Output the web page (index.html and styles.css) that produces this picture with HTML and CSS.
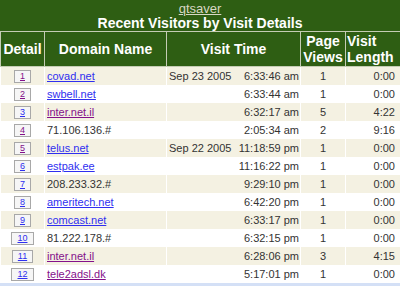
FILE: index.html
```html
<!DOCTYPE html>
<html>
<head>
<meta charset="utf-8">
<link rel="stylesheet" href="styles.css">
</head>
<body>
<div class="page">
  <div class="top">
    <a class="site" href="#">qtsaver</a>
    <div class="title">Recent Visitors by Visit Details</div>
  </div>
  <table class="visits">
    <colgroup>
      <col class="c1"><col class="c2"><col class="c3"><col class="c4"><col class="c5">
    </colgroup>
    <thead>
      <tr>
        <th>Detail</th>
        <th>Domain Name</th>
        <th>Visit Time</th>
        <th>Page Views</th>
        <th class="left">Visit Length</th>
      </tr>
    </thead>
    <tbody>
      <tr class="odd"><td class="det"><a class="btn v" href="#">1</a></td><td class="dom"><a href="#">covad.net</a></td><td class="time"><div class="tw"><span>Sep 23 2005</span><span>6:33:46 am</span></div></td><td class="pv">1</td><td class="len">0:00</td></tr>
      <tr><td class="det"><a class="btn v" href="#">2</a></td><td class="dom"><a href="#">swbell.net</a></td><td class="time"><div class="tw"><span></span><span>6:33:44 am</span></div></td><td class="pv">1</td><td class="len">0:00</td></tr>
      <tr class="odd"><td class="det"><a class="btn" href="#">3</a></td><td class="dom"><a class="v" href="#">inter.net.il</a></td><td class="time"><div class="tw"><span></span><span>6:32:17 am</span></div></td><td class="pv">5</td><td class="len">4:22</td></tr>
      <tr><td class="det"><a class="btn v" href="#">4</a></td><td class="dom">71.106.136.#</td><td class="time"><div class="tw"><span></span><span>2:05:34 am</span></div></td><td class="pv">2</td><td class="len">9:16</td></tr>
      <tr class="odd"><td class="det"><a class="btn v" href="#">5</a></td><td class="dom"><a href="#">telus.net</a></td><td class="time"><div class="tw"><span>Sep 22 2005</span><span>11:18:59 pm</span></div></td><td class="pv">1</td><td class="len">0:00</td></tr>
      <tr><td class="det"><a class="btn" href="#">6</a></td><td class="dom"><a href="#">estpak.ee</a></td><td class="time"><div class="tw"><span></span><span>11:16:22 pm</span></div></td><td class="pv">1</td><td class="len">0:00</td></tr>
      <tr class="odd"><td class="det"><a class="btn" href="#">7</a></td><td class="dom">208.233.32.#</td><td class="time"><div class="tw"><span></span><span>9:29:10 pm</span></div></td><td class="pv">1</td><td class="len">0:00</td></tr>
      <tr><td class="det"><a class="btn" href="#">8</a></td><td class="dom"><a href="#">ameritech.net</a></td><td class="time"><div class="tw"><span></span><span>6:42:20 pm</span></div></td><td class="pv">1</td><td class="len">0:00</td></tr>
      <tr class="odd"><td class="det"><a class="btn" href="#">9</a></td><td class="dom"><a href="#">comcast.net</a></td><td class="time"><div class="tw"><span></span><span>6:33:17 pm</span></div></td><td class="pv">1</td><td class="len">0:00</td></tr>
      <tr><td class="det"><a class="btn" href="#">10</a></td><td class="dom">81.222.178.#</td><td class="time"><div class="tw"><span></span><span>6:32:15 pm</span></div></td><td class="pv">1</td><td class="len">0:00</td></tr>
      <tr class="odd"><td class="det"><a class="btn" href="#">11</a></td><td class="dom"><a class="v" href="#">inter.net.il</a></td><td class="time"><div class="tw"><span></span><span>6:28:06 pm</span></div></td><td class="pv">3</td><td class="len">4:15</td></tr>
      <tr><td class="det"><a class="btn" href="#">12</a></td><td class="dom"><a class="v" href="#">tele2adsl.dk</a></td><td class="time"><div class="tw"><span></span><span>5:17:01 pm</span></div></td><td class="pv">1</td><td class="len">0:00</td></tr>
    </tbody>
  </table>
  <div class="bottom"></div>
</div>
</body>
</html>
```

FILE: styles.css
```css
html, body {
  margin: 0;
  padding: 0;
  background: #ffffff;
}
.page {
  width: 400px;
  font-family: "Liberation Sans", Arial, sans-serif;
}
.top {
  background: #2e5e13;
  padding-top: 1px;
  padding-bottom: 1px;
  text-align: center;
}
.site {
  display: block;
  width: max-content;
  margin: 0 auto;
  font-size: 13px;
  line-height: 15px;
  color: #d8d8c4;
  text-decoration: underline;
}
.title {
  font-size: 14px;
  line-height: 14px;
  font-weight: bold;
  color: #ffffff;
}
.visits {
  width: 400px;
  table-layout: fixed;
  border-collapse: collapse;
  font-size: 11px;
  color: #333333;
}
.c1 { width: 44px; }
.c2 { width: 122px; }
.c3 { width: 134px; }
.c4 { width: 45px; }
.c5 { width: 55px; }
.visits th {
  background: #2e5e13;
  color: #ffffff;
  font-size: 14px;
  line-height: 16px;
  font-weight: bold;
  height: 34px;
  padding: 0;
  border: 1px solid #c4ccb4;
  text-align: center;
  vertical-align: middle;
}
.visits th.left {
  text-align: left;
  padding-left: 1px;
}
.visits td {
  height: 18px;
  padding: 0;
  border-left: 1px solid #ffffff;
  border-right: 1px solid #ffffff;
  white-space: nowrap;
  vertical-align: middle;
}
.visits tr.odd td {
  background: #f4f1e2;
}
.visits a {
  color: #2f2ff0;
  text-decoration: underline;
}
.visits a.v {
  color: #84108a;
}
.det {
  text-align: center;
}
.btn {
  display: inline-block;
  font-size: 9px;
  line-height: 11px;
  padding: 0 5px;
  min-width: 5px;
  border: 1px solid #a8a8a8;
  background: #f6f6f6;
  vertical-align: middle;
}
.dom {
  padding-left: 2px !important;
}
.time {
  padding-left: 2px !important;
  padding-right: 1px !important;
}
.tw {
  display: flex;
  justify-content: space-between;
}
.pv {
  text-align: center;
}
.len {
  text-align: right;
  padding-right: 5px !important;
}
.bottom {
  height: 10px;
  background: #d4e0f6;
}
```
